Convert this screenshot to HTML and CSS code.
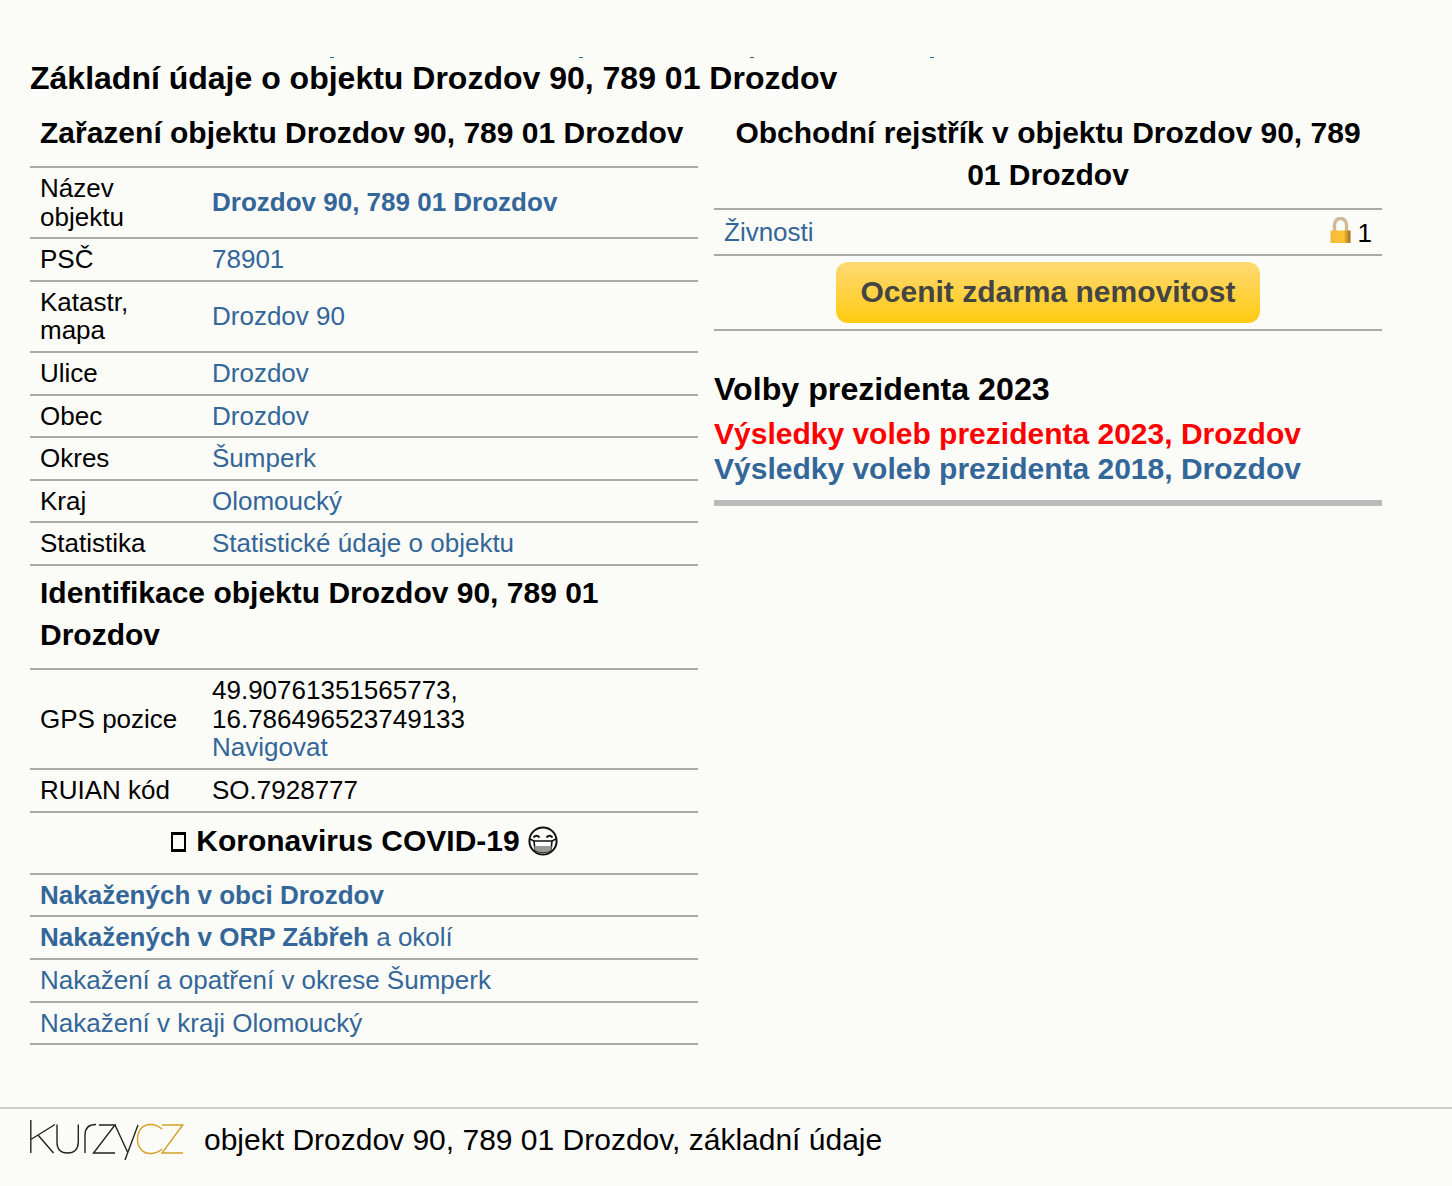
FILE: index.html
```html
<!DOCTYPE html>
<html lang="cs">
<head>
<meta charset="utf-8">
<title>Drozdov 90</title>
<link rel="stylesheet" href="styles.css">
</head>
<body>
<main class="page">
<div class="specks"></div>
<h1 class="title">Základní údaje o objektu Drozdov 90, 789 01 Drozdov</h1>
<div class="cols">
<section class="col">
<h2 class="head">Zařazení objektu Drozdov 90, 789 01 Drozdov</h2>
<table class="tbl">
<tr><td class="k">Název objektu</td><td><a href="#"><b>Drozdov 90, 789 01 Drozdov</b></a></td></tr>
<tr><td class="k">PSČ</td><td><a href="#">78901</a></td></tr>
<tr><td class="k">Katastr, mapa</td><td><a href="#">Drozdov 90</a></td></tr>
<tr><td class="k">Ulice</td><td><a href="#">Drozdov</a></td></tr>
<tr><td class="k">Obec</td><td><a href="#">Drozdov</a></td></tr>
<tr><td class="k">Okres</td><td><a href="#">Šumperk</a></td></tr>
<tr><td class="k">Kraj</td><td><a href="#">Olomoucký</a></td></tr>
<tr><td class="k">Statistika</td><td><a href="#">Statistické údaje o objektu</a></td></tr>
</table>
<h2 class="head sub">Identifikace objektu Drozdov 90, 789 01 Drozdov</h2>
<table class="tbl gps">
<tr><td class="k">GPS pozice</td><td>49.90761351565773,<br>16.786496523749133<br><a href="#">Navigovat</a></td></tr>
<tr><td class="k">RUIAN kód</td><td>SO.7928777</td></tr>
</table>
<h2 class="head center covid"><span class="tofu"></span> Koronavirus COVID-19
<svg class="mask" viewBox="0 0 30 30" aria-hidden="true"><circle cx="15" cy="15" r="13.6" fill="none" stroke="#111" stroke-width="2"/><path d="M5.5 11.5q3-3.5 6 0M18.5 11.5q3-3.5 6 0" fill="none" stroke="#111" stroke-width="2"/><path d="M6 15h18l-1 9q-8 5-16 0z" fill="#fff" stroke="#111" stroke-width="1.6"/><path d="M6.5 20h17v4q-8 5-17 0z" fill="#999"/><path d="M2 13l4 2M28 13l-4 2" stroke="#111" stroke-width="1.4"/></svg></h2>
<table class="tbl">
<tr><td><a href="#"><b>Nakažených v obci Drozdov</b></a></td></tr>
<tr><td><a href="#"><b>Nakažených v ORP Zábřeh</b> a okolí</a></td></tr>
<tr><td><a href="#">Nakažení a opatření v okrese Šumperk</a></td></tr>
<tr><td><a href="#">Nakažení v kraji Olomoucký</a></td></tr>
</table>
</section>
<section class="col">
<h2 class="head center right">Obchodní rejstřík v objektu Drozdov 90, 789 01 Drozdov</h2>
<div class="trade"><a href="#">Živnosti</a><span class="count"><svg class="lock" viewBox="0 0 21 26" aria-hidden="true"><defs><linearGradient id="lockbody" x1="0" x2="1" y1="0" y2="0"><stop offset="0" stop-color="#f2b93a"/><stop offset=".65" stop-color="#fcc431"/><stop offset="1" stop-color="#a06a1e"/></linearGradient></defs><path d="M4.5 15V7.5a6 6 0 0 1 12 0V15" fill="none" stroke="#cdb995" stroke-width="3.4"/><rect x="0.5" y="13.5" width="20" height="12.5" fill="url(#lockbody)"/></svg> 1</span></div>
<div class="cta"><a class="btn" href="#">Ocenit zdarma nemovitost</a></div>
<h2 class="head plain">Volby prezidenta 2023</h2>
<p class="votes"><a class="red" href="#">Výsledky voleb prezidenta 2023, Drozdov</a><br><a href="#">Výsledky voleb prezidenta 2018, Drozdov</a></p>
</section>
</div>
</main>
<footer class="foot">
<svg class="logo" viewBox="0 0 154 41" aria-label="kurzy.cz"><g fill="none" stroke="#222" stroke-width="1.4"><path d="M.8 0V33M.8 19.5 25 4.5M8 15 23.5 33"/><path d="M27 4.5V22Q27 33 37.5 33T48.3 22V4.5"/><path d="M55 33V15Q55 4.5 66 4.5"/><path d="M69 5H85L63.5 33H85"/><path d="M85 5 98 33M108 5 95 40"/></g><g fill="none" stroke="#d3a227" stroke-width="1.4"><path d="M132 9Q127 4.5 120.5 4.5C112 4.5 107.5 11 107.5 19S112 33.5 120.5 33.5Q127 33.5 132 29"/><path d="M132 5H152.7L132 33H153"/></g></svg>
<span>objekt Drozdov 90, 789 01 Drozdov, základní údaje</span>
</footer>
</body>
</html>
```
FILE: styles.css
```css
* { box-sizing: border-box; }
html, body { margin: 0; background: #fbfbf7; }
body { font-family: "Liberation Sans", Arial, sans-serif; color: #000; font-size: 26px; line-height: 28.5px; }
a { color: #369; text-decoration: none; }
.page { padding: 57px 30px 0; height: 1107px; }
.specks {
  height: 1px;
  background:
    linear-gradient(#369, #369) 300px 0 / 4px 1px no-repeat,
    linear-gradient(#369, #369) 549px 0 / 4px 1px no-repeat,
    linear-gradient(#369, #369) 720px 0 / 4px 1px no-repeat,
    linear-gradient(#369, #369) 900px 0 / 4px 1px no-repeat;
}
.title { margin: 0; font-size: 32px; line-height: 41px; font-weight: 700; }
.cols { display: grid; grid-template-columns: 668px 668px; column-gap: 16px; }
.head { margin: 0; padding: 13px 5px 12px 10px; font-size: 30px; line-height: 42px; font-weight: 700; }
.head.center { text-align: center; padding-right: 10px; }
.head.sub { padding: 6px 10px 12px; }
.tbl { width: 100%; border-collapse: collapse; border-top: 2px solid #aaa; table-layout: fixed; }
.tbl td { padding: 6.07px 10px; border-bottom: 2px solid #aaa; vertical-align: middle; }
.tbl .k { width: 172px; }
.gps tr:first-child td { padding-top: 6.3px; padding-bottom: 6.3px; }
.head.covid { padding: 7px 10px 11px; }
.tofu { display: inline-block; width: 15px; height: 20px; border-style: solid; border-color: #000; border-width: 3px 2.5px; vertical-align: -1px; margin-right: 2px; margin-left: 1px; }
.mask { width: 30px; height: 30px; vertical-align: -5px; }
.trade { display: flex; justify-content: space-between; align-items: center; border-top: 2px solid #aaa; border-bottom: 2px solid #aaa; padding: 6px 10px; height: 48px; }
.lock { width: 21px; height: 26px; vertical-align: -1px; margin-right: -1px; }
.cta { display: flex; justify-content: center; padding: 6px 0; border-bottom: 2px solid #aaa; }
.btn { display: block; width: 424px; height: 61px; line-height: 59px; text-align: center; border-radius: 12px; font-size: 30px; font-weight: 700; color: #444; background: linear-gradient(#ffd974, #ffcb11); }
.head.plain { padding: 37px 0 4px; font-size: 32.2px; }
.votes { margin: 0; padding: 1.5px 0 13.5px; border-bottom: 6px solid #bbb; font-size: 30px; line-height: 35.5px; font-weight: 700; }
.red { color: #f00; }
.foot { display: flex; align-items: center; gap: 20px; height: 79px; padding: 0 30px 15px; border-top: 2px solid #ccc; font-size: 30px; }
.logo { width: 154px; height: 41px; }
```
